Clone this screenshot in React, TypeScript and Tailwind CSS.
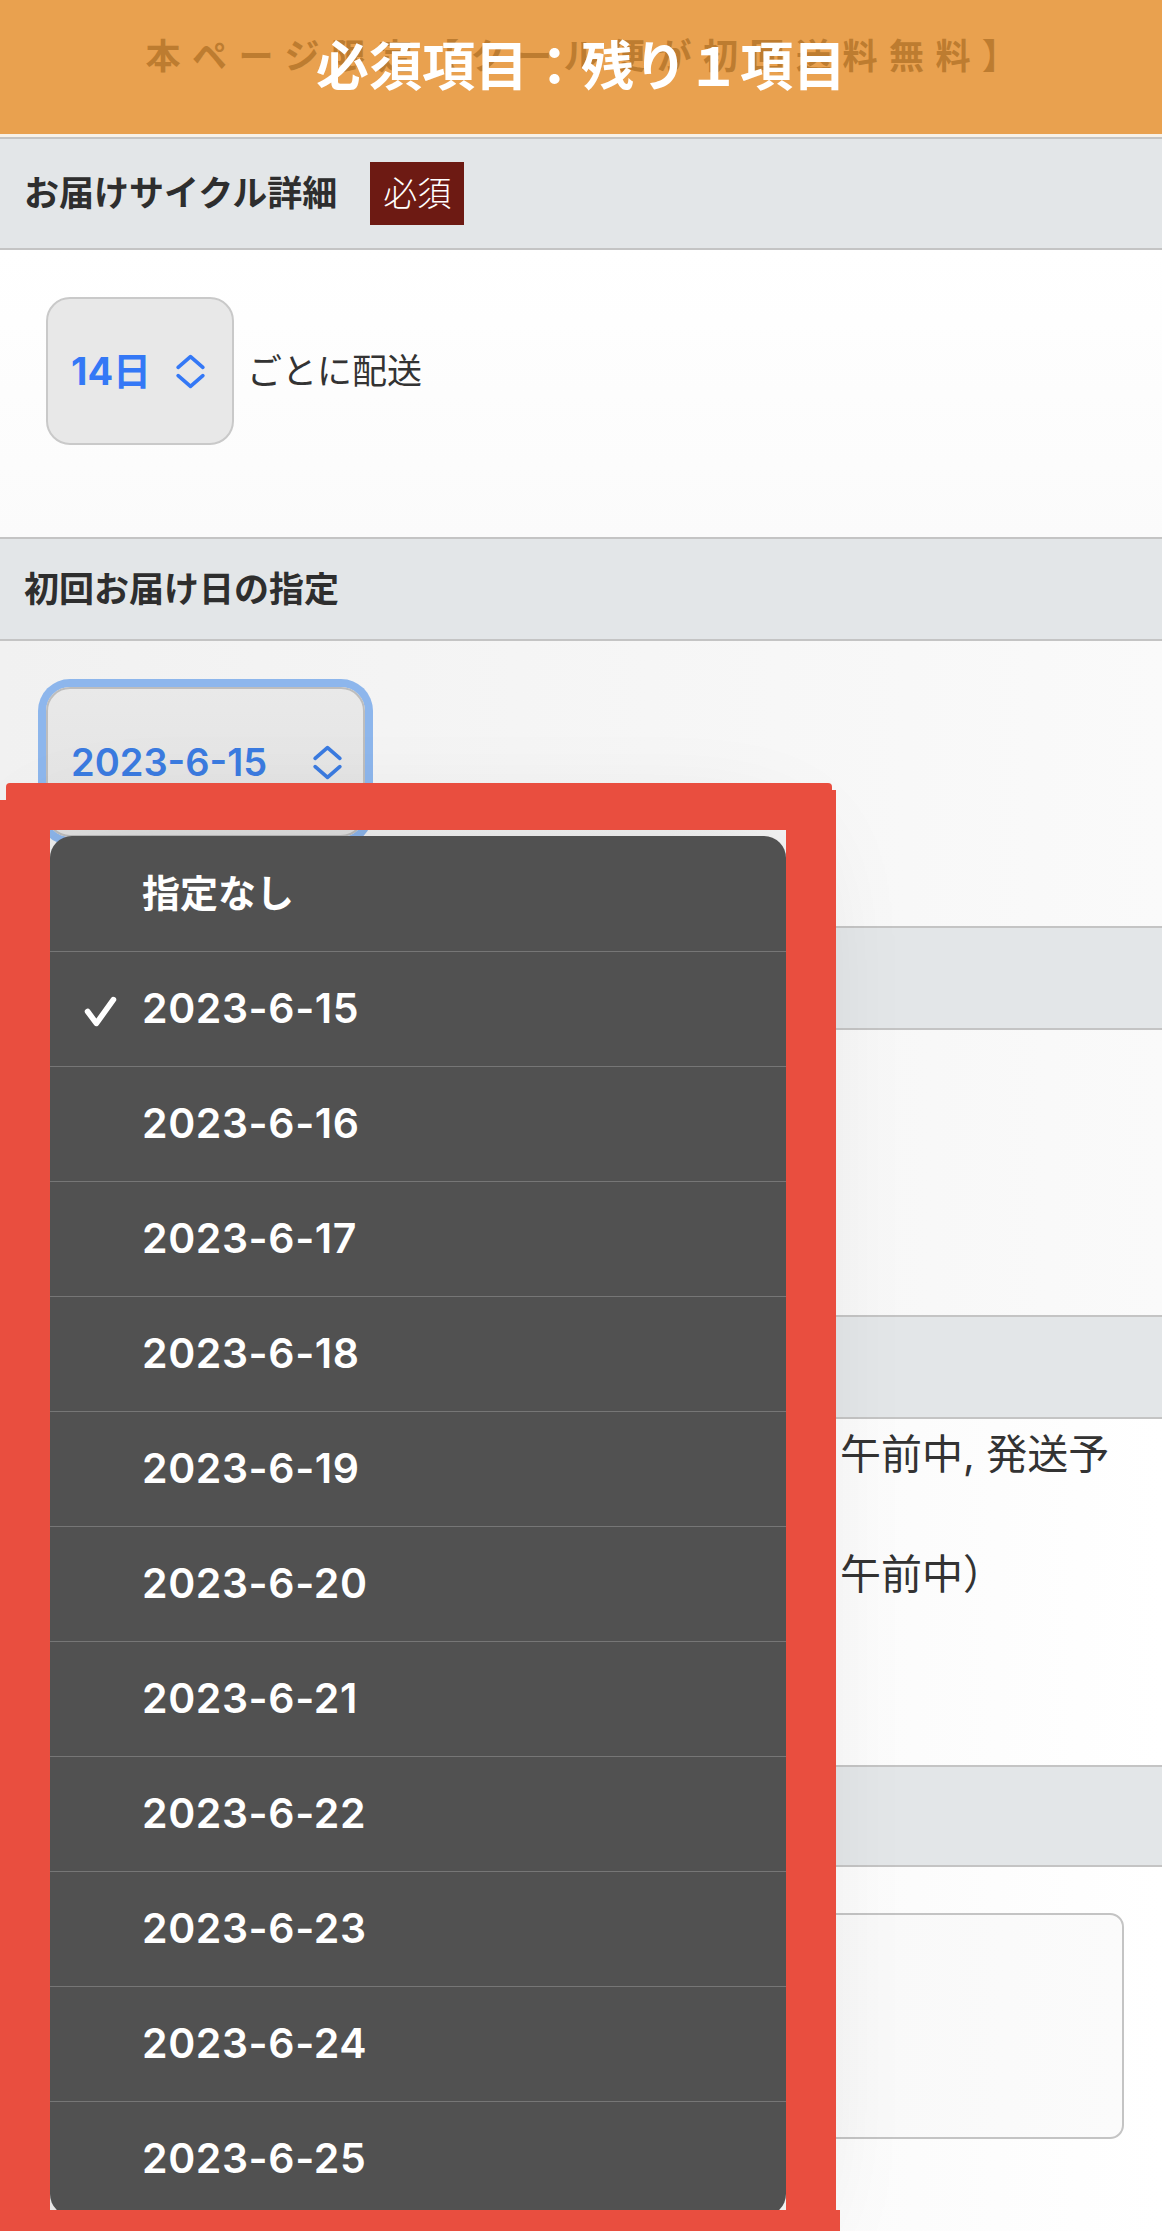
import React from "react";

const FONT = { fontFamily: 'Inter, "Noto Sans CJK JP", "Noto Sans", sans-serif' };

function UpDown({ className }: { className?: string }) {
  return (
    <svg viewBox="0 0 30 34" className={className} fill="none" stroke="currentColor" strokeWidth={3.6} strokeLinecap="round" strokeLinejoin="round">
      <polyline points="3,13 15,2.5 27,13" />
      <polyline points="3,21 15,31.5 27,21" />
    </svg>
  );
}

function Check() {
  return (
    <svg viewBox="0 0 32 30" className="w-[33px] h-[31px]" fill="none" stroke="white" strokeWidth={5.5} strokeLinecap="round" strokeLinejoin="round">
      <polyline points="3.5,15 12,26.5 28.5,3.5" />
    </svg>
  );
}

function SectionHeader({ children, h }: { children?: React.ReactNode; h: string }) {
  return (
    <div className={`${h} flex items-center gap-[33px] border-y-2 border-[#c4c4c4] bg-[#e3e6e8] pl-6`}>
      {children}
    </div>
  );
}

const items = [
  "指定なし",
  "2023-6-15",
  "2023-6-16",
  "2023-6-17",
  "2023-6-18",
  "2023-6-19",
  "2023-6-20",
  "2023-6-21",
  "2023-6-22",
  "2023-6-23",
  "2023-6-24",
  "2023-6-25",
];

export default function App() {
  return (
    <div style={FONT} className="relative w-[1162px] h-[2231px] overflow-hidden bg-white text-[#333]">
      {/* top banner */}
      <div className="relative h-[134px] bg-[#e9a14f]">
        <div className="absolute inset-0 flex justify-center pt-[39px] pl-[12px]">
          <span className="text-[35px] font-bold tracking-[11.5px] text-[#bd7c30] leading-none">
            本ページ限定【クール便が初回送料無料】
          </span>
        </div>
        <div className="absolute inset-0 flex items-center justify-center">
          <span className="text-[53px] font-bold text-white leading-none">必須項目：残り１項目</span>
        </div>
      </div>
      <div className="h-[3px] bg-[#f7f1e8]" />

      {/* section 1 */}
      <SectionHeader h="h-[113px]">
        <span className="text-[35px] font-bold text-[#2e2e2e]">お届けサイクル詳細</span>
        <span className="bg-[#6d1a13] px-[13px] h-[63px] flex items-center text-[34px] font-light text-white">必須</span>
      </SectionHeader>
      <div className="h-[287px] pt-[47px] pl-[46px] flex items-start bg-gradient-to-b from-white to-[#fbfbfb]">
        <div className="flex items-center">
          <div className="w-[188px] h-[148px] rounded-[24px] border-2 border-[#c9c9c9] bg-[#e8e8e8] flex items-center pl-[23px]">
            <span className="text-[38px] font-bold text-[#3478f6]">14日</span>
            <UpDown className="ml-[24px] w-[31px] h-[35px] text-[#3478f6]" />
          </div>
          <span className="ml-[13px] text-[35px] text-[#333]">ごとに配送</span>
        </div>
      </div>

      {/* section 2 */}
      <SectionHeader h="h-[104px]">
        <span className="text-[35px] font-bold text-[#2e2e2e]">初回お届け日の指定</span>
      </SectionHeader>
      <div className="h-[285px] pt-[46px] pl-[46px] bg-gradient-to-r from-[#f1f1f1] to-[#fafafa]">
        <div className="w-[319px] h-[150px] rounded-[24px] border-2 border-[#bdbdbd] bg-gradient-to-b from-[#e9e9e9] to-[#e2e2e2] shadow-[0_0_0_8px_#8db6ec] flex items-center pl-[23px]">
          <span className="text-[38px] font-semibold text-[#3b7be0]">2023-6-15</span>
          <UpDown className="ml-[45px] w-[31px] h-[35px] text-[#3b7be0]" />
        </div>
      </div>

      {/* section 3 (header text hidden under the open menu) */}
      <SectionHeader h="h-[104px]" />
      <div className="h-[285px] bg-gradient-to-r from-[#f0f0f0] to-[#fafafa]" />

      {/* section 4 */}
      <SectionHeader h="h-[104px]" />
      <div className="h-[346px] pt-[5px] pl-6 bg-gradient-to-r from-[#f1f1f1] to-white text-[41px] text-[#333] leading-[60px]">
        <div className="flex">
          <span className="w-[816px] shrink-0" />
          <span className="whitespace-nowrap">午前中, 発送予</span>
        </div>
        <div className="h-[60px]" />
        <div className="flex">
          <span className="w-[816px] shrink-0" />
          <span className="whitespace-nowrap">午前中）</span>
        </div>
      </div>

      {/* section 5 */}
      <SectionHeader h="h-[102px]" />
      <div className="pt-[46px] pl-[46px] pr-[38px] bg-gradient-to-r from-[#f1f1f1] to-white h-[400px]">
        <div className="h-[226px] rounded-[14px] border-2 border-[#c4c4c4] bg-gradient-to-r from-[#f2f2f2] to-[#fbfbfb]" />
      </div>

      {/* dropdown menu */}
      <div className="absolute left-[50px] top-[836px] w-[736px] rounded-[22px] bg-[#515151] overflow-hidden shadow-[0_10px_120px_rgba(0,0,0,0.14)]">
        {items.map((it, i) => (
          <div
            key={it}
            className={`relative h-[115px] flex items-center pl-[92px] text-white ${i > 0 ? "border-t border-[#767676]" : ""}`}
          >
            {i === 1 && (
              <span className="absolute left-[34px] top-[44px]">
                <Check />
              </span>
            )}
            <span className={i === 0 ? "text-[38px] font-semibold" : "text-[41px] font-semibold tracking-[0.6px]"}>{it}</span>
          </div>
        ))}
      </div>

      {/* red annotation frame */}
      <div className="absolute left-[6px] top-[783px] w-[826px] h-[47px] bg-[#e94e3f] rounded-[4px]" />
      <div className="absolute left-0 top-[800px] w-[50px] h-[1431px] bg-[#e94e3f]" />
      <div className="absolute left-[786px] top-[790px] w-[50px] h-[1441px] bg-[#e94e3f]" />
      <div className="absolute left-0 top-[2210px] w-[840px] h-[21px] bg-[#e94e3f]" />
    </div>
  );
}
